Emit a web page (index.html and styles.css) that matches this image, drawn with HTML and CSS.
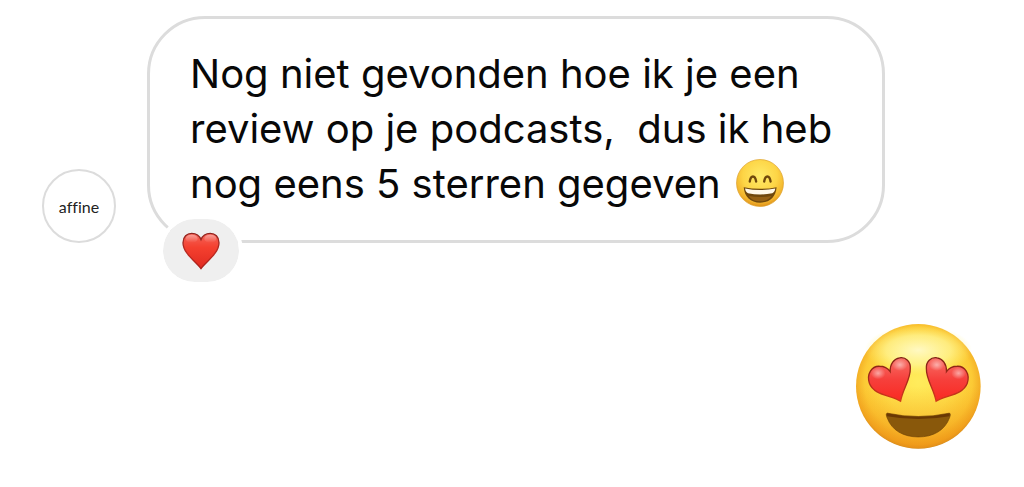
FILE: index.html
```html
<!DOCTYPE html>
<html lang="nl">
<head>
<meta charset="utf-8">
<meta name="viewport" content="width=device-width, initial-scale=1">
<title>Chat</title>
<link rel="stylesheet" href="styles.css">
</head>
<body>
<main class="chat">
  <article class="message received">
    <div class="avatar">affine</div>
    <div class="bubble">
      <p class="text">Nog niet gevonden hoe ik je een review op je podcasts,  dus ik heb nog eens 5 sterren gegeven <svg class="inline-emoji" viewBox="20 29 143 143" role="img" aria-label="Lachend gezicht">
        <defs>
          <radialGradient id="grin-face" cx="0.5" cy="0.35" r="0.66">
            <stop offset="0" stop-color="#ffea68"/>
            <stop offset="0.55" stop-color="#fdd546"/>
            <stop offset="0.85" stop-color="#f2b32c"/>
            <stop offset="1" stop-color="#dd8d17"/>
          </radialGradient>
        </defs>
        <circle cx="91.500" cy="100.500" r="70" fill="url(#grin-face)" stroke="#dda02c" stroke-width="2"/>
        <path d="M61 96C64 76 77 76 80 96M104 96C107 76 120 76 123 96" fill="none" stroke="#70480c" stroke-width="7" stroke-linecap="round"/>
        <path d="M43 113Q92 123 141 113C139 141 121 159 92 159S45 141 43 113Z" fill="#70480c"/>
        <path d="M47 117Q92 126 137 117C136 125 133 129 128 131Q92 138 56 131C51 129 48 125 47 117Z" fill="#fff9ea"/>
        <path d="M58 139Q92 145 126 139C117 151 106 155 92 155S67 151 58 139Z" fill="#946014"/>
      </svg></p>
      <span class="reaction">
        <svg class="heart" viewBox="126 125 114 112" role="img" aria-label="Hart">
          <defs>
            <linearGradient id="heart-fill" x1="0" y1="0" x2="0" y2="1">
              <stop offset="0" stop-color="#f4655a"/>
              <stop offset="0.4" stop-color="#f4402f"/>
              <stop offset="1" stop-color="#e02a20"/>
            </linearGradient>
            <linearGradient id="heart-edge" x1="0" y1="0" x2="0" y2="1">
              <stop offset="0" stop-color="#8e2520"/>
              <stop offset="0.6" stop-color="#bd2a21"/>
              <stop offset="1" stop-color="#a81f19"/>
            </linearGradient>
            <linearGradient id="heart-shine" x1="0" y1="0" x2="0" y2="1">
              <stop offset="0" stop-color="#fff" stop-opacity="0.4"/>
              <stop offset="1" stop-color="#fff" stop-opacity="0"/>
            </linearGradient>
          </defs>
          <path d="M183 234C167 212 129 188 129 156C129 138 141 128 155 128C169 128 179 136 183 147C187 136 197 128 211 128C225 128 237 138 237 156C237 188 199 212 183 234Z" fill="url(#heart-fill)" stroke="url(#heart-edge)" stroke-width="4"/>
          <ellipse cx="155" cy="144" rx="18" ry="12" fill="url(#heart-shine)"/>
          <ellipse cx="211" cy="144" rx="18" ry="12" fill="url(#heart-shine)"/>
        </svg>
      </span>
    </div>
  </article>
  <article class="message sent">
    <svg class="large-emoji" viewBox="35 28 373 373" role="img" aria-label="Gezicht met hartjesogen">
      <defs>
        <radialGradient id="love-face" cx="0.5" cy="0.46" r="0.54">
          <stop offset="0" stop-color="#ffec5c"/>
          <stop offset="0.5" stop-color="#ffe04a"/>
          <stop offset="0.8" stop-color="#fcca35"/>
          <stop offset="0.94" stop-color="#f2aa23"/>
          <stop offset="1" stop-color="#d08a20"/>
        </radialGradient>
        <radialGradient id="face-shine">
          <stop offset="0" stop-color="#fffbd0" stop-opacity="0.9"/>
          <stop offset="0.6" stop-color="#fff79a" stop-opacity="0.7"/>
          <stop offset="1" stop-color="#fff27a" stop-opacity="0"/>
        </radialGradient>
        <linearGradient id="face-low" x1="0" y1="0" x2="0" y2="1">
          <stop offset="0.5" stop-color="#f39b16" stop-opacity="0"/>
          <stop offset="1" stop-color="#ee9114" stop-opacity="0.65"/>
        </linearGradient>
        <linearGradient id="eye-fill" x1="0" y1="0" x2="0" y2="1">
          <stop offset="0" stop-color="#f87168"/>
          <stop offset="0.5" stop-color="#f6403c"/>
          <stop offset="1" stop-color="#fa2921"/>
        </linearGradient>
        <linearGradient id="eye-edge" x1="0" y1="0" x2="0" y2="1">
          <stop offset="0" stop-color="#7e2214"/>
          <stop offset="0.6" stop-color="#b12b1b"/>
          <stop offset="1" stop-color="#d33918"/>
        </linearGradient>
        <radialGradient id="eye-shine">
          <stop offset="0" stop-color="#fff" stop-opacity="0.5"/>
          <stop offset="1" stop-color="#fff" stop-opacity="0"/>
        </radialGradient>
      </defs>
      <circle cx="221" cy="214" r="186" fill="url(#love-face)"/>
      <circle cx="221" cy="214" r="185" fill="url(#face-low)"/>
      <ellipse cx="221" cy="106" rx="160" ry="74" fill="url(#face-shine)"/>
      <path d="M168 258C140 240 88 241 75 205C66 177 82 153 105 154C119 154 130 160 137 170C136 147 149 131 165 129C184 126 198 140 197 160C198 194 176 218 168 258Z" fill="url(#eye-fill)" stroke="url(#eye-edge)" stroke-width="4"/>
      <ellipse cx="101" cy="175" rx="22" ry="18" fill="url(#eye-shine)"/>
      <ellipse cx="166" cy="150" rx="23" ry="18" fill="url(#eye-shine)"/>
      <path d="M274 258C302 240 354 241 367 205C376 177 360 153 337 154C323 154 312 160 305 170C306 147 293 131 277 129C258 126 244 140 245 160C244 194 266 218 274 258Z" fill="url(#eye-fill)" stroke="url(#eye-edge)" stroke-width="4"/>
      <ellipse cx="341" cy="175" rx="22" ry="18" fill="url(#eye-shine)"/>
      <ellipse cx="276" cy="150" rx="23" ry="18" fill="url(#eye-shine)"/>
      <path d="M128 294Q221 314 314 294C318 296 316 302 314 308C300 346 265 365 221 365S142 346 128 308C126 302 123 296 128 294Z" fill="#89580b" stroke="#6e4005" stroke-width="2"/>
      <path d="M127 294Q221 315 315 294L314 303Q221 320 128 303Z" fill="#693704"/>
    </svg>
  </article>
</main>
</body>
</html>
```
FILE: styles.css
```css
body {
  margin: 0;
  background: #fff;
  color: #080808;
  font-family: Inter, "Liberation Sans", sans-serif;
}

.chat {
  display: flex;
  flex-direction: column;
  gap: 81px;
  padding: 16px 43px 36px 42px;
}

.message {
  display: flex;
}

.received {
  align-items: flex-end;
  gap: 31px;
  padding-right: 96px;
}

.sent {
  justify-content: flex-end;
}

.avatar {
  display: flex;
  flex: none;
  align-items: center;
  justify-content: center;
  box-sizing: border-box;
  width: 74px;
  height: 74px;
  border: 2px solid #dcdcdc;
  border-radius: 50%;
  color: #222;
  font-family: Lato, sans-serif;
  font-size: 16px;
  font-variant-ligatures: none;
}

.bubble {
  position: relative;
  flex: 1;
  padding: 27px 40px 29px;
  border: 3px solid #dcdcdc;
  border-radius: 58px;
}

.text {
  margin: 0;
  font-size: 40px;
  line-height: 55px;
  white-space: pre-wrap;
}

.inline-emoji {
  width: 48px;
  height: 48px;
  margin: 0 4px;
  vertical-align: -9px;
}

/* Reaction badge over the bubble's lower edge */
.reaction {
  position: absolute;
  bottom: -46px;
  left: 9px;
  display: flex;
  align-items: center;
  justify-content: center;
  width: 76px;
  height: 63px;
  border: 4px solid #fff;
  border-radius: 36px;
  background: #efefef;
  background-clip: padding-box;
}

.heart {
  width: 38px;
  height: 38px;
}

.large-emoji {
  width: 125px;
  height: 125px;
}
```
